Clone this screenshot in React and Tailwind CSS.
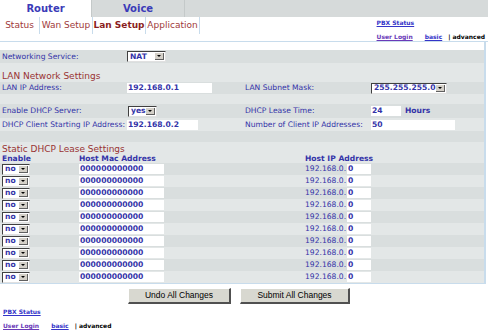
import React from "react";

const dark = "bg-[#d9dede]";
const light = "bg-[#e3e7e7]";

function Select({ className, value }) {
  return (
    <div className={`flex items-stretch bg-white border border-t-[#404040] border-l-[#404040] border-b-[#e0e0e0] border-r-[#e0e0e0] ${className}`}>
      <span className="flex-1 pl-[2px] flex items-center font-bold text-[#3333a8]">{value}</span>
      <span className="w-[9px] my-[1px] mr-[1px] bg-[#d4d0c8] border-r border-b border-[#606060] flex items-center justify-center">
        <span className="w-0 h-0 border-l-[2px] border-r-[2px] border-t-[2px] border-l-transparent border-r-transparent border-t-black" />
      </span>
    </div>
  );
}

function Field({ className, value }) {
  return (
    <div className={`bg-white flex items-center pl-[1px] font-bold text-[#3333a8] ${className}`}>{value}</div>
  );
}

function Row({ bg, className, children }) {
  return <div className={`grid grid-cols-[127px_118px_126px_114px] items-center ${bg} ${className}`}>{children}</div>;
}

function Links({ className }) {
  return (
    <div className={`flex flex-col text-[6px] leading-[6px] font-bold ${className}`}>
      <a className="underline text-[#3434c8]">PBX Status</a>
      <div className="mt-[8px] flex">
        <a className="underline text-[#6a3ab8]">User Login</a>
        <a className="ml-[12px] underline text-[#3434c8]">basic</a>
        <span className="ml-[6px] text-black">| advanced</span>
      </div>
    </div>
  );
}

export default function App() {
  const leases = Array.from({ length: 10 });
  return (
    <div className="w-[488px] h-[336px] bg-white font-['DejaVu_Sans',sans-serif] text-[7.6px] leading-none text-[#3333a8] overflow-hidden">
      {/* tabs */}
      <div className="flex h-[17px] text-[10px] font-bold text-[#3b3bb8]">
        <div className="w-[91px] flex items-center justify-center bg-white">Router</div>
        <div className="w-[93px] flex items-center justify-center bg-[#d6dada] border-l border-[#c4c9c9]">Voice</div>
        <div className="flex-1 bg-[#d6dada] border-l border-[#c4c9c9]" />
      </div>
      <div className="flex h-[25px] border-b border-[#c8dcec]">
        <div className="flex h-[17px] items-stretch text-[9px] text-[#a03a3a] whitespace-nowrap">
          <div className="w-[40px] flex items-center justify-center border-r border-[#c8dcec]">Status</div>
          <div className="w-[52px] flex items-center justify-center">Wan Setup</div>
          <div className="w-[54px] flex items-center justify-center font-bold text-[#8a1e1e] border-l border-r border-[#c8dcec]">Lan Setup</div>
          <div className="w-[54px] flex items-center justify-center border-r border-[#c8dcec]">Application</div>
        </div>
        <Links className="ml-auto mr-[3px] mt-[3px]" />
      </div>

      {/* content */}
      <div className="w-[486px] border-r-2 border-[#c8dcec]">
        <div className="h-[8px] bg-white" />
        <Row bg={dark} className="h-[13px]">
          <span className="pl-[2px]">Networking Service:</span>
          <Select className="w-[39px] h-[11px]" value="NAT" />
        </Row>
        <div className={`h-[8px] ${light}`} />
        <div className={`h-[11px] ${light} pl-[2px] flex items-center text-[9px] text-[#993333]`}>LAN Network Settings</div>
        <Row bg={dark} className="h-[12px]">
          <span className="pl-[2px]">LAN IP Address:</span>
          <Field className="w-[85px] h-[10px]" value="192.168.0.1" />
          <span>LAN Subnet Mask:</span>
          <Select className="w-[76px] h-[11px]" value="255.255.255.0" />
        </Row>
        <div className={`h-[10px] ${light}`} />
        <Row bg={dark} className="h-[14px]">
          <span className="pl-[2px]">Enable DHCP Server:</span>
          <Select className="w-[29px] h-[11px] ml-[1px]" value="yes" />
          <span>DHCP Lease Time:</span>
          <div className="flex items-center">
            <Field className="w-[30px] h-[10px]" value="24" />
            <span className="ml-[4px] font-bold">Hours</span>
          </div>
        </Row>
        <Row bg={light} className="h-[13px]">
          <span className="pl-[2px] whitespace-nowrap">DHCP Client Starting IP Address:</span>
          <Field className="w-[71px] h-[10px]" value="192.168.0.2" />
          <span>Number of Client IP Addresses:</span>
          <Field className="w-[84px] h-[10px]" value="50" />
        </Row>
        <div className={`h-[11px] ${dark}`} />
        <div className={`h-[12px] ${light} pl-[2px] flex items-end text-[9px] text-[#993333]`}>Static DHCP Lease Settings</div>
        <div className={`h-[9px] ${light} grid grid-cols-[79px_226px_1fr] items-center font-bold`}>
          <span className="pl-[2px]">Enable</span>
          <span>Host Mac Address</span>
          <span>Host IP Address</span>
        </div>
        {leases.map((_, i) => (
          <div key={i} className={`h-[12px] grid grid-cols-[79px_226px_42px_1fr] items-center ${i % 2 === 0 ? dark : light}`}>
            <Select className="w-[28px] h-[11px] ml-[2px]" value="no" />
            <Field className="w-[85px] h-[10px]" value="000000000000" />
            <span className="whitespace-nowrap">192.168.0.</span>
            <Field className="w-[24px] h-[10px]" value="0" />
          </div>
        ))}
        <div className="h-[1px] bg-[#c8dcec]" />
      </div>

      {/* buttons */}
      <div className="flex gap-[9px] mt-[4px] pl-[128px] font-['Liberation_Sans',sans-serif] text-[8.5px] text-black">
        <button className="w-[103px] h-[16px] bg-[#d8d8d0] border-r-2 border-b-2 border-[#505050] border-t border-l border-t-white border-l-white">Undo All Changes</button>
        <button className="w-[110px] h-[16px] bg-[#d8d8d0] border-r-2 border-b-2 border-[#505050] border-t border-l border-t-white border-l-white">Submit All Changes</button>
      </div>

      {/* footer links */}
      <Links className="pl-[3px] mt-[5px]" />
    </div>
  );
}
